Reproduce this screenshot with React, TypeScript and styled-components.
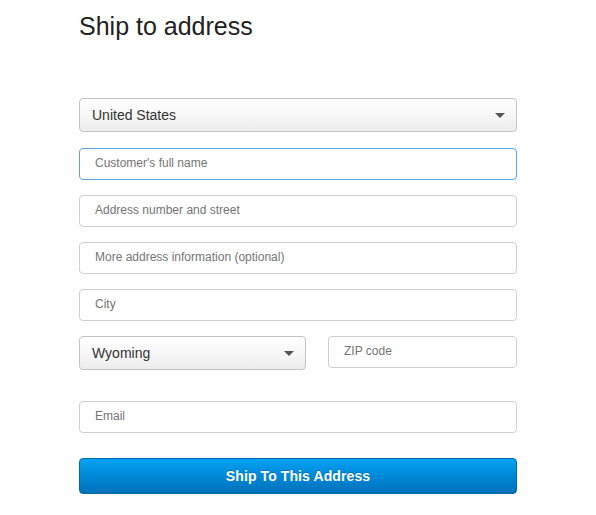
import styled, { createGlobalStyle } from 'styled-components';

const GlobalStyle = createGlobalStyle`
  html, body {
    margin: 0;
    padding: 0;
    background: #fff;
    font-family: 'Liberation Sans', Arial, sans-serif;
  }
`;

const Page = styled.div`
  width: 438px;
  padding: 11px 0 20px 79px;
`;

const Title = styled.h1`
  margin: 0 0 57px;
  font-size: 25px;
  font-weight: normal;
  color: #222;
  line-height: 30px;
`;

const Form = styled.form`
  display: flex;
  flex-direction: column;
`;

const SelectBox = styled.div<{ $gap?: number }>`
  position: relative;
  box-sizing: border-box;
  height: 34px;
  border: 1px solid #c4c4c4;
  border-radius: 4px;
  background: linear-gradient(to bottom, #ffffff 0%, #f7f7f7 50%, #ececec 100%);
  display: flex;
  align-items: center;
  padding: 0 30px 1px 12px;
  font-size: 14px;
  color: #333;
  margin-bottom: ${(p) => p.$gap ?? 0}px;
`;

const Caret = styled.span`
  position: absolute;
  right: 11px;
  top: 14px;
  width: 0;
  height: 0;
  border-left: 5px solid transparent;
  border-right: 5px solid transparent;
  border-top: 5px solid #555;
`;

const Field = styled.input<{ $gap?: number; $focused?: boolean }>`
  box-sizing: border-box;
  display: block;
  width: 100%;
  height: 32px;
  border: 1px solid ${(p) => (p.$focused ? '#58a8e0' : '#cfcfcf')};
  border-radius: 4px;
  padding: 0 15px 2px;
  font-family: 'Liberation Sans', Arial, sans-serif;
  font-size: 12px;
  color: #333;
  outline: none;
  margin: 0 0 ${(p) => p.$gap ?? 0}px;
  ::placeholder {
    color: #6f6f6f;
  }
`;

const Row = styled.div`
  display: grid;
  grid-template-columns: 227px 189px;
  justify-content: space-between;
  align-items: start;
  margin-bottom: 31px;
`;

const SubmitButton = styled.button`
  box-sizing: border-box;
  height: 36px;
  width: 100%;
  border: 1px solid #0567a6;
  border-radius: 4px;
  background: linear-gradient(to bottom, #05a2f2 0%, #0188d8 50%, #0072bb 100%);
  color: #fff;
  font-family: 'Liberation Sans', Arial, sans-serif;
  font-size: 14px;
  font-weight: bold;
  letter-spacing: 0.1px;
  text-shadow: 0 -1px 0 rgba(0, 0, 0, 0.2);
  cursor: pointer;
`;

export default function App() {
  return (
    <>
      <GlobalStyle />
      <Page>
        <Title>Ship to address</Title>
        <Form onSubmit={(e) => e.preventDefault()}>
          <SelectBox $gap={16}>
            United States
            <Caret />
          </SelectBox>
          <Field $focused $gap={15} placeholder="Customer's full name" />
          <Field $gap={15} placeholder="Address number and street" />
          <Field $gap={15} placeholder="More address information (optional)" />
          <Field $gap={15} placeholder="City" />
          <Row>
            <SelectBox>
              Wyoming
              <Caret />
            </SelectBox>
            <Field placeholder="ZIP code" />
          </Row>
          <Field $gap={25} placeholder="Email" />
          <SubmitButton type="submit">Ship To This Address</SubmitButton>
        </Form>
      </Page>
    </>
  );
}
